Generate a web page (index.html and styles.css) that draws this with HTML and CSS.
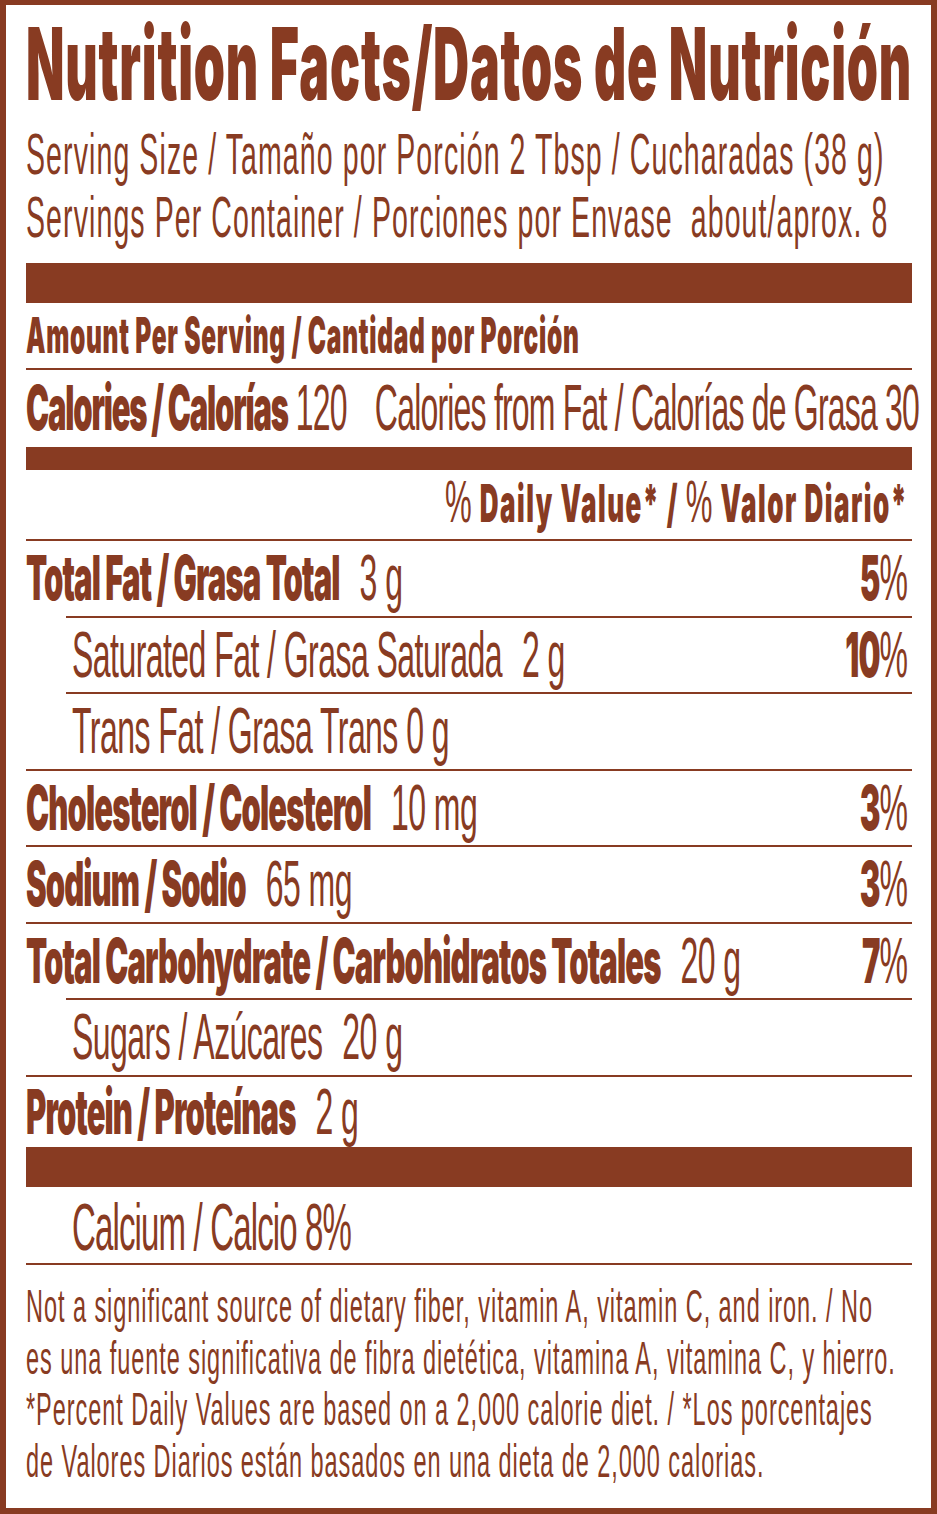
FILE: index.html
```html
<!DOCTYPE html>
<html lang="en">
<head>
<meta charset="utf-8">
<title>Nutrition Facts / Datos de Nutrición</title>
<link rel="stylesheet" href="styles.css">
</head>
<body>
<div class="label">
  <div class="inner">
    <h1 class="title">Nutrition Facts/Datos de Nutrición</h1>
    <div class="serving">
      <p>Serving Size / Tamaño por Porción 2 Tbsp / Cucharadas (38 g)</p>
      <p>Servings Per Container / Porciones por Envase&nbsp; about/aprox. 8</p>
    </div>
    <div class="bar bar-thick"></div>
    <div class="amount"><b>Amount Per Serving / Cantidad por Porción</b></div>
    <div class="calories"><b>Calories / Calorías</b> 120<span class="fat-cal">Calories from Fat / Calorías de Grasa 30</span></div>
    <div class="bar bar-mid"></div>
    <div class="dv"><b><span class="pc">%</span> Daily Value* / <span class="pc">%</span> Valor Diario*</b></div>
    <div class="row"><span><b>Total Fat / Grasa Total</b><span class="qty">3 g</span></span><span class="pct"><b>5</b>%</span></div>
    <div class="row sub"><span>Saturated Fat / Grasa Saturada<span class="qty">2 g</span></span><span class="pct"><b>10</b>%</span></div>
    <div class="row sub"><span>Trans Fat / Grasa Trans 0 g</span></div>
    <div class="row"><span><b>Cholesterol / Colesterol</b><span class="qty">10 mg</span></span><span class="pct"><b>3</b>%</span></div>
    <div class="row"><span><b>Sodium / Sodio</b><span class="qty">65 mg</span></span><span class="pct"><b>3</b>%</span></div>
    <div class="row"><span><b>Total Carbohydrate / Carbohidratos Totales</b><span class="qty">20 g</span></span><span class="pct"><b>7</b>%</span></div>
    <div class="row sub"><span>Sugars / Azúcares<span class="qty">20 g</span></span></div>
    <div class="row last"><span><b>Protein / Proteínas</b><span class="qty">2 g</span></span></div>
    <div class="bar bar-thick"></div>
    <div class="calcium">Calcium / Calcio 8%</div>
    <p class="foot">Not a significant source of dietary fiber, vitamin A, vitamin C, and iron. / No<br>es una fuente significativa de fibra dietética, vitamina A, vitamina C, y hierro.<br>*Percent Daily Values are based on a 2,000 calorie diet. / *Los porcentajes<br>de Valores Diarios están basados en una dieta de 2,000 calorias.</p>
  </div>
</div>
</body>
</html>
```
FILE: styles.css
```css
* { box-sizing: border-box; margin: 0; padding: 0; }
html, body { background: #fff; }
body { margin: 0; }

.label {
  width: 937px;
  height: 1514px;
  border: 6px solid #883b22;
  border-top-width: 5px;
  padding: 0 19px 0 20px;
  overflow: hidden;
  color: #883b22;
  background: #fff;
  font-family: "Liberation Sans", Arial, sans-serif;
  font-weight: 400;
}

/* condensed typography: content laid out at double width, squeezed horizontally */
.inner {
  width: 1772px;
  transform: scaleX(0.5);
  transform-origin: 0 0;
}

b {
  font-family: Inter, "Liberation Sans", sans-serif;
  font-weight: 900;
  line-height: 1;
}

.title {
  font-family: Inter, "Liberation Sans", sans-serif;
  font-weight: 900;
  font-size: 100px;
  line-height: 118px;
  height: 118px;
  white-space: nowrap;
  letter-spacing: 1.6px;
}

.serving { height: 126px; }
.serving p {
  font-size: 57px;
  line-height: 63px;
  letter-spacing: 2.2px;
  white-space: nowrap;
}

.bar { background: #883b22; }
.bar-thick { height: 40px; }
.bar-mid { height: 23px; }
.serving + .bar { margin-top: 14px; }

.amount {
  height: 67px;
  padding-top: 2px;
  line-height: 63px;
  font-size: 49px;
  border-bottom: 2px solid #883b22;
  white-space: nowrap;
}
.amount b { letter-spacing: 1.4px; }

.calories {
  height: 77px;
  line-height: 77px;
  font-size: 64px;
  letter-spacing: -1.6px;
  white-space: nowrap;
}
.calories b { font-size: 62px; letter-spacing: -2.4px; }
.fat-cal { margin-left: 56px; }

.dv {
  height: 69px;
  line-height: 69px;
  font-size: 52px;
  text-align: right;
  padding-right: 8px;
  white-space: nowrap;
}
.dv b { letter-spacing: 3px; }
.pc { font-family: "Liberation Sans", Arial, sans-serif; font-weight: 400; font-size: 60px; }

.row {
  display: flex;
  justify-content: space-between;
  height: 76.5px;
  line-height: 74.5px;
  border-top: 2px solid #883b22;
  font-size: 64px;
  letter-spacing: -1.1px;
  white-space: nowrap;
  padding-right: 8px;
}
.row b { font-size: 62px; letter-spacing: -1.8px; }
.row.sub { margin-left: 80px; padding-left: 12px; }
.row.last { height: 72.5px; line-height: 70.5px; }
.qty { margin-left: 40px; }
.pct { letter-spacing: 0; }

.calcium {
  height: 78px;
  padding: 4px 0 0 92px;
  line-height: 72px;
  font-size: 66px;
  letter-spacing: -1.7px;
  border-bottom: 2px solid #883b22;
  white-space: nowrap;
}

.foot {
  padding-top: 15px;
  font-size: 47px;
  line-height: 51.5px;
  letter-spacing: 1.9px;
  white-space: nowrap;
}
```
